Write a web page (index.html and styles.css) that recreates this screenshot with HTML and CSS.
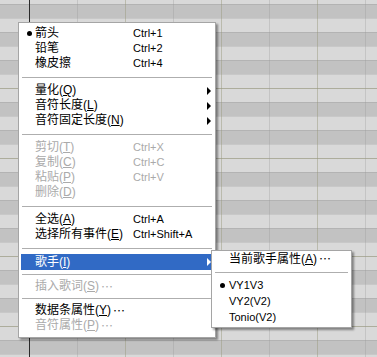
FILE: index.html
```html
<!doctype html>
<html lang="zh-CN">
<head>
    <meta charset="utf-8">
    <title>Piano Roll Menu</title>
    <link rel="stylesheet" href="styles.css">
</head>
<body>
<div class="roll">

    <div class="menu main">
        <div class="item"><span class="chk"><i class="dot"></i></span><span>箭头</span><span class="key">Ctrl+1</span><span></span></div>
        <div class="item"><span class="chk"></span><span>铅笔</span><span class="key">Ctrl+2</span><span></span></div>
        <div class="item"><span class="chk"></span><span>橡皮擦</span><span class="key">Ctrl+4</span><span></span></div>
        <div class="sep"></div>
        <div class="item"><span class="chk"></span><span class="wide">量化(<u>Q</u>)</span><span class="arrow"></span></div>
        <div class="item"><span class="chk"></span><span class="wide">音符长度(<u>L</u>)</span><span class="arrow"></span></div>
        <div class="item"><span class="chk"></span><span class="wide">音符固定长度(<u>N</u>)</span><span class="arrow"></span></div>
        <div class="sep"></div>
        <div class="item off"><span class="chk"></span><span>剪切(<u>T</u>)</span><span class="key">Ctrl+X</span><span></span></div>
        <div class="item off"><span class="chk"></span><span>复制(<u>C</u>)</span><span class="key">Ctrl+C</span><span></span></div>
        <div class="item off"><span class="chk"></span><span>粘贴(<u>P</u>)</span><span class="key">Ctrl+V</span><span></span></div>
        <div class="item off"><span class="chk"></span><span class="wide">删除(<u>D</u>)</span></div>
        <div class="sep"></div>
        <div class="item"><span class="chk"></span><span>全选(<u>A</u>)</span><span class="key">Ctrl+A</span><span></span></div>
        <div class="item"><span class="chk"></span><span>选择所有事件(<u>E</u>)</span><span class="key">Ctrl+Shift+A</span><span></span></div>
        <div class="sep"></div>
        <div class="item active"><span class="chk"></span><span class="wide">歌手(<u>I</u>)</span><span class="arrow"></span></div>
        <div class="sep thin"></div>
        <div class="item off"><span class="chk"></span><span class="wide">插入歌词(<u>S</u>)<span class="el">…</span></span></div>
        <div class="sep thin"></div>
        <div class="item"><span class="chk"></span><span class="wide">数据条属性(<u>Y</u>)<span class="el">…</span></span></div>
        <div class="item off"><span class="chk"></span><span class="wide">音符属性(<u>P</u>)<span class="el">…</span></span></div>
    </div>

    <div class="menu submenu">
        <div class="item"><span class="chk"></span><span>当前歌手属性(<u>A</u>)<span class="el">…</span></span></div>
        <div class="sep"></div>
        <div class="item latin"><span class="chk"><i class="dot"></i></span><span>VY1V3</span></div>
        <div class="item latin"><span class="chk"></span><span>VY2(V2)</span></div>
        <div class="item latin"><span class="chk"></span><span>Tonio(V2)</span></div>
    </div>

</div>
</body>
</html>
```

FILE: styles.css
```css
body {
    margin: 0;
}

/* piano roll behind the menu */
.roll {
    position: relative;
    width: 377px;
    height: 357px;
    overflow: hidden;
    font-family: "Liberation Sans", "Noto Sans CJK SC", sans-serif;
    font-size: 12px;
    color: #000;
    background-color: #d8d8d8;
    background-image:
        linear-gradient(90deg, transparent 29px, #2a2a2a 29px, #2a2a2a 30px, transparent 30px),
        linear-gradient(90deg, rgba(150, 150, 120, .45) 0, rgba(150, 150, 120, .45) 1px, transparent 1px, transparent 48px, rgba(150, 150, 150, .3) 48px, rgba(150, 150, 150, .3) 49px, transparent 49px),
        linear-gradient(to bottom, transparent 84px, #adad9c 84px, #adad9c 85px, transparent 85px, transparent 154px, #adad9c 154px, #adad9c 155px, transparent 155px),
        linear-gradient(to bottom, rgba(0, 0, 0, .08) 0, rgba(0, 0, 0, .08) 1px, transparent 1px),
        linear-gradient(to bottom,
            #c2c2c2 0, #c2c2c2 14px, #d9d9d9 14px, #d9d9d9 28px,
            #c2c2c2 28px, #c2c2c2 42px, #d9d9d9 42px, #d9d9d9 56px,
            #c2c2c2 56px, #c2c2c2 70px, #d9d9d9 70px, #d9d9d9 98px,
            #c2c2c2 98px, #c2c2c2 112px, #d9d9d9 112px, #d9d9d9 126px,
            #c2c2c2 126px, #c2c2c2 140px, #d9d9d9 140px, #d9d9d9 168px);
    background-size: 100% 100%, 96px 100%, 100% 168px, 100% 14px, 100% 168px;
    background-position: 0 0, 29px 0, 0 4px, 0 4px, 0 4px;
    background-repeat: no-repeat, repeat-x, repeat-y, repeat-y, repeat-y;
}

.menu {
    position: absolute;
    box-sizing: border-box;
    background: #fff;
    border: 1px solid #a5a5a5;
    box-shadow: 2px 2px 2px rgba(0, 0, 0, .4);
}

.main {
    left: 18px;
    top: 22px;
    width: 198px;
    padding: 3px 2px 4px;
}

.submenu {
    left: 211px;
    top: 250px;
    width: 141px;
    padding: 0 2px 2px;
}

.item {
    display: grid;
    grid-template-columns: 14px 98px 1fr 16px;
    align-items: center;
    height: 15px;
    line-height: 15px;
    white-space: nowrap;
}

.item .wide {
    grid-column: 2 / 4;
}

.submenu .item {
    grid-template-columns: 15px 1fr;
    height: 16px;
    line-height: 16px;
}

.item u {
    text-decoration: underline;
    text-underline-offset: 1px;
}

.key,
.latin {
    font-size: 11px;
}

.el {
    display: inline-block;
    height: 15px;
    line-height: 15px;
    vertical-align: top;
    overflow: hidden;
    font-family: "Noto Sans CJK SC", sans-serif;
    margin-left: 2px;
}

.off {
    color: #aaa;
}

.active {
    background: #316ac5;
    color: #fff;
    height: 16px;
}

.chk {
    display: flex;
    justify-content: flex-end;
    padding-right: 3px;
}

.submenu .chk {
    padding-right: 4px;
}

.dot {
    width: 5px;
    height: 5px;
    border-radius: 50%;
    background: #000;
}

.arrow {
    grid-column: 4;
    justify-self: end;
    margin-right: 2px;
    width: 0;
    height: 0;
    border-top: 4px solid transparent;
    border-bottom: 4px solid transparent;
    border-left: 4px solid #000;
}

.active .arrow {
    border-left-color: #fff;
}

.sep {
    height: 12px;
    display: flex;
    align-items: center;
    padding: 0 1px;
}

.sep::after {
    content: "";
    flex: 1;
    height: 1px;
    background: #aeaeae;
}

.sep.thin {
    height: 9px;
}

.submenu .sep {
    height: 10px;
}
```
